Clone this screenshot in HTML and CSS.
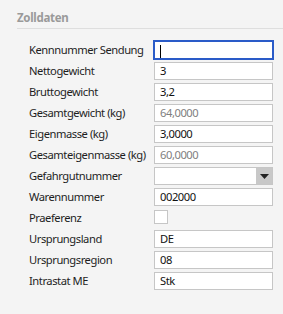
FILE: index.html
```html
<!DOCTYPE html>
<html lang="de">
<head>
  <meta charset="UTF-8">
  <title>Zolldaten</title>
  <link rel="stylesheet" href="styles.css">
</head>
<body>
  <div class="panel">
    <h2 class="panel-title">Zolldaten</h2>

    <div class="form">
      <label>Kennnummer Sendung</label>
      <div class="field focused"><span class="caret"></span></div>

      <label>Nettogewicht</label>
      <div class="field">3</div>

      <label>Bruttogewicht</label>
      <div class="field">3,2</div>

      <label>Gesamtgewicht (kg)</label>
      <div class="field disabled">64,0000</div>

      <label>Eigenmasse (kg)</label>
      <div class="field">3,0000</div>

      <label>Gesamteigenmasse (kg)</label>
      <div class="field disabled">60,0000</div>

      <label>Gefahrgutnummer</label>
      <div class="field select">
        <span class="select-value"></span>
        <span class="select-btn">
          <svg width="9" height="5" viewBox="0 0 9 5"><path d="M0 0h9L4.5 5z" fill="#222"/></svg>
        </span>
      </div>

      <label>Warennummer</label>
      <div class="field">002000</div>

      <label>Praeferenz</label>
      <div><span class="checkbox"></span></div>

      <label>Ursprungsland</label>
      <div class="field">DE</div>

      <label>Ursprungsregion</label>
      <div class="field">08</div>

      <label>Intrastat ME</label>
      <div class="field">Stk</div>
    </div>
  </div>
</body>
</html>
```

FILE: styles.css
```css
body {
  margin: 0;
  background-color: #f4f4f4;
  font-family: "Noto Sans", sans-serif;
  font-size: 11.2px;
  letter-spacing: -0.45px;
  color: #1e1e1e;
}
.panel {
  padding: 9px 0 0 17px;
}
.panel-title {
  margin: 0;
  font-size: 11.5px;
  font-weight: bold;
  letter-spacing: -0.3px;
  color: #9a9a9a;
  line-height: 18px;
  padding-bottom: 1px;
  border-bottom: 1px solid #dedede;
}
.form {
  display: grid;
  grid-template-columns: 125px 119px;
  row-gap: 3px;
  padding: 12px 0 0 12px;
}
label {
  line-height: 18px;
  white-space: nowrap;
}
.field {
  box-sizing: border-box;
  height: 18px;
  background: #fff;
  border: 1px solid #c6c6c6;
  padding: 0 5px;
  line-height: 16px;
  color: #111;
}
.field.disabled {
  color: #808080;
}
.field.focused {
  border-color: #2a5bc8;
  box-shadow: 0 0 0 1px #2a5bc8;
}
.caret {
  display: inline-block;
  width: 1px;
  height: 13px;
  background: #000;
  vertical-align: middle;
}
.field.select {
  display: flex;
  padding: 0;
}
.select-value {
  flex: 1;
}
.select-btn {
  width: 16px;
  background: #c8c8c8;
  display: flex;
  align-items: center;
  justify-content: center;
}
.checkbox {
  display: block;
  box-sizing: border-box;
  width: 14px;
  height: 14px;
  background: #fff;
  border: 1px solid #c6c6c6;
  margin-top: 1px;
}
```
